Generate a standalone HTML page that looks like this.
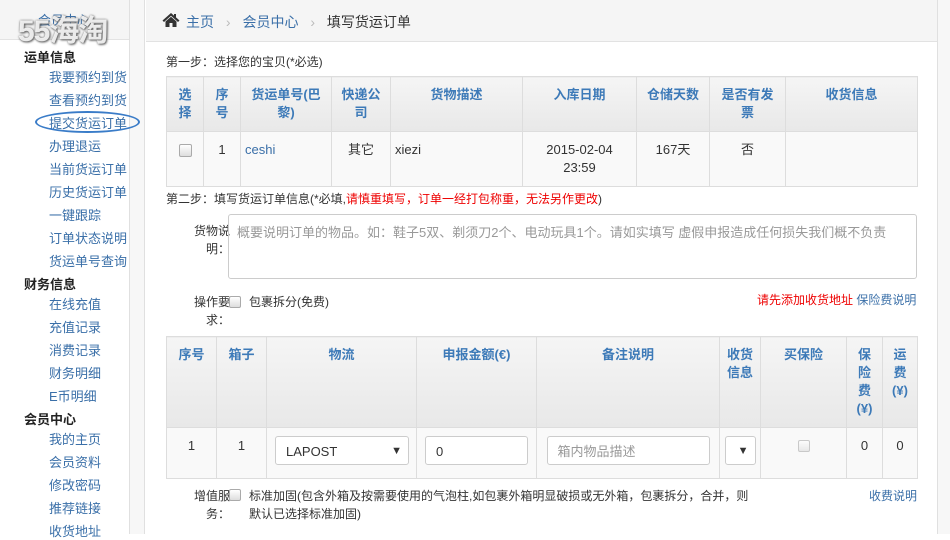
<!DOCTYPE html>
<html><head><meta charset="utf-8"><style>
*{box-sizing:border-box;margin:0;padding:0}
body{width:950px;height:534px;overflow:hidden;background:#fff;font-family:"Liberation Sans","Noto Sans CJK SC",sans-serif;font-size:12px;color:#333;position:relative}
.a{position:absolute}
.side a{position:absolute;left:49px;color:#3a6fa8;font-size:13px;text-decoration:none;white-space:nowrap}
.side b{position:absolute;left:24px;color:#222;font-size:13px;font-weight:bold}
table{border-collapse:collapse;position:absolute;table-layout:fixed}
td,th{border:1px solid #ddd;text-align:center;vertical-align:top;font-size:13px}
th{background:linear-gradient(#f5f5f5,#e8e8e8);color:#3d7ab8;font-weight:bold;padding:9px 8px;line-height:18px}
td{background:#f9f9f9;padding:9px 4px;line-height:18px}
.cb{display:inline-block;width:12px;height:12px;border:1px solid #aaa;border-radius:2px;background:linear-gradient(#fff,#ddd)}
.inp{display:inline-block;border:1px solid #ccc;border-radius:3px;background:#fff;height:29px;text-align:left;padding:6px 10px;font-size:13px}
</style></head><body>
<div class="a" style="left:0;top:0;width:129px;height:40px;background:#f5f5f5;border-bottom:1px solid #e3e3e3"></div>
<div class="a" style="left:129px;top:0;width:1px;height:534px;background:#e0e0e0"></div>
<div class="a" style="left:130px;top:0;width:15px;height:534px;background:#f7f7f7;border-right:1px solid #e0e0e0"></div>
<div class="a" style="left:937px;top:0;width:13px;height:534px;background:#f7f7f7;border-left:1px solid #e0e0e0"></div>
<div class="a" style="left:146px;top:0;width:791px;height:42px;background:#f5f5f5;border-bottom:1px solid #e2e2e2"></div>
<div class="side">
<a style="top:10px;left:38px">会员中心</a>
<div class="a" style="left:18px;top:16px;font-size:30px;line-height:32px;font-weight:bold;color:rgba(255,255,255,.85);text-shadow:0 0 2px #777,1px 1px 2px #555;letter-spacing:-1px">55海淘</div>
<b style="top:47px">运单信息</b>
<a style="top:67px">我要预约到货</a>
<a style="top:90px">查看预约到货</a>
<a style="top:113px">提交货运订单</a>
<div class="a" style="left:35px;top:111px;width:105px;height:22px;border:2px solid #3a7cc8;border-radius:50%"></div>
<a style="top:136px">办理退运</a>
<a style="top:159px">当前货运订单</a>
<a style="top:182px">历史货运订单</a>
<a style="top:205px">一键跟踪</a>
<a style="top:228px">订单状态说明</a>
<a style="top:251px">货运单号查询</a>
<b style="top:274px">财务信息</b>
<a style="top:294px">在线充值</a>
<a style="top:317px">充值记录</a>
<a style="top:340px">消费记录</a>
<a style="top:363px">财务明细</a>
<a style="top:386px">E币明细</a>
<b style="top:409px">会员中心</b>
<a style="top:429px">我的主页</a>
<a style="top:452px">会员资料</a>
<a style="top:475px">修改密码</a>
<a style="top:498px">推荐链接</a>
<a style="top:521px">收货地址</a>
</div>
<svg class="a" style="left:162px;top:12px" width="18" height="16" viewBox="0 0 18 16"><path d="M9 1L0.5 8.5 2 10 9 3.8 16 10 17.5 8.5 14 5.4V2h-2v1.6z" fill="#333"/><path d="M3.5 9.5L9 4.8l5.5 4.7V15H10.5v-4h-3v4H3.5z" fill="#333"/></svg>
<div class="a" style="left:186px;top:12px;font-size:14px;color:#3a6fa8">主页 <span style="color:#bbb;margin:0 8px">›</span> 会员中心 <span style="color:#bbb;margin:0 8px">›</span> <span style="color:#333">填写货运订单</span></div>
<div class="a" style="left:166px;top:53px">第一步：选择您的宝贝(*必选)</div>
<table style="left:166px;top:76px;width:751px">
<colgroup><col style="width:37px"><col style="width:37px"><col style="width:91px"><col style="width:59px"><col style="width:132px"><col style="width:114px"><col style="width:73px"><col style="width:76px"><col style="width:132px"></colgroup>
<tr style="height:53px"><th>选择</th><th>序号</th><th>货运单号(巴黎)</th><th>快递公司</th><th>货物描述</th><th>入库日期</th><th>仓储天数</th><th>是否有发票</th><th>收货信息</th></tr>
<tr style="height:51px"><td><span class="cb" style="width:13px;height:13px;margin-top:3px"></span></td><td>1</td><td style="text-align:left;color:#3a6fa8">ceshi</td><td>其它</td><td style="text-align:left">xiezi</td><td>2015-02-04<br>23:59</td><td>167天</td><td>否</td><td></td></tr>
</table>
<div class="a" style="left:166px;top:190px">第二步：填写货运订单信息(*必填,<span style="color:#e00">请慎重填写，订单一经打包称重，无法另作更改</span>)</div>
<div class="a" style="left:190px;top:222px;width:40px;text-align:right;line-height:18px">货物说<br>明：</div>
<div class="a" style="left:228px;top:214px;width:689px;height:65px;border:1px solid #ccc;border-radius:3px;padding:7px 8px;color:#999;font-size:13px">概要说明订单的物品。如：鞋子5双、剃须刀2个、电动玩具1个。请如实填写 虚假申报造成任何损失我们概不负责</div>
<div class="a" style="left:190px;top:293px;width:40px;text-align:right;line-height:18px">操作要<br>求：</div>
<span class="cb a" style="left:229px;top:296px"></span>
<div class="a" style="left:249px;top:293px">包裹拆分(免费)</div>
<div class="a" style="left:757px;top:291px;color:#e00">请先添加收货地址 <span style="color:#3a6fa8">保险费说明</span></div>
<table style="left:166px;top:336px;width:751px">
<colgroup><col style="width:50px"><col style="width:50px"><col style="width:150px"><col style="width:120px"><col style="width:183px"><col style="width:41px"><col style="width:86px"><col style="width:36px"><col style="width:35px"></colgroup>
<tr style="height:89px"><th>序号</th><th>箱子</th><th>物流</th><th>申报金额(€)</th><th>备注说明</th><th style="padding:9px 6px">收货信息</th><th>买保险</th><th>保险费(¥)</th><th>运费(¥)</th></tr>
<tr style="height:47px"><td>1</td><td>1</td><td style="padding:8px"><span class="inp" style="width:134px;position:relative">LAPOST<span style="position:absolute;right:6px;top:5px;font-size:11px">▼</span></span></td><td style="padding:8px"><span class="inp" style="width:103px">0</span></td><td style="padding:8px"><span class="inp" style="width:163px;color:#999">箱内物品描述</span></td><td style="padding:8px 4px"><span class="inp" style="width:31px;padding:6px 4px;position:relative"><span style="position:absolute;right:6px;top:5px;font-size:11px">▼</span></span></td><td><span class="cb" style="margin-top:3px;opacity:.6"></span></td><td>0</td><td>0</td></tr>
</table>
<div class="a" style="left:190px;top:487px;width:40px;text-align:right;line-height:18px">增值服<br>务：</div>
<span class="cb a" style="left:229px;top:489px"></span>
<div class="a" style="left:249px;top:487px;width:540px;line-height:18px">标准加固(包含外箱及按需要使用的气泡柱,如包裹外箱明显破损或无外箱，包裹拆分，合并，则<br>默认已选择标准加固)</div>
<div class="a" style="left:869px;top:487px;color:#3a6fa8">收费说明</div>
</body></html>
